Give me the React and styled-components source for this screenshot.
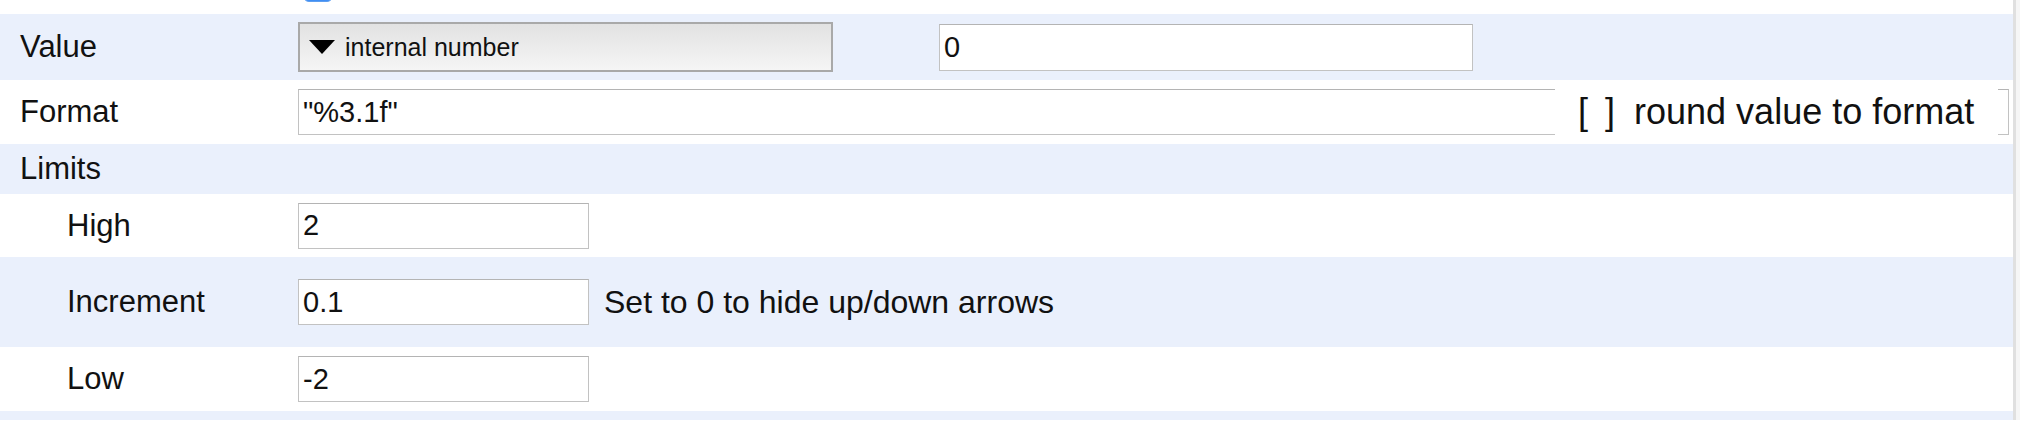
import React from 'react'
import styled, { createGlobalStyle } from 'styled-components'

const Global = createGlobalStyle`
  body {
    margin: 0;
    background: #fff;
    font-family: "Liberation Sans", Arial, sans-serif;
    color: #111;
  }
`

const Panel = styled.div`
  width: 2013px;
  border-right: 3px solid #e0e0e0;
  box-shadow: 4px 0 0 #f6f6f6;
`

const Row = styled.div`
  position: relative;
  display: flex;
  align-items: center;
  height: ${p => p.h}px;
  background: ${p => (p.shade ? '#eaf0fc' : '#fff')};
  overflow: ${p => (p.clip ? 'hidden' : 'visible')};
`

const Label = styled.div`
  box-sizing: border-box;
  flex: none;
  width: 298px;
  padding-left: ${p => (p.indent ? 67 : 20)}px;
  font-size: 31px;
`

const Checkbox = styled.div`
  margin-left: 303px;
  margin-top: -28px;
  align-self: flex-start;
  width: 30px;
  height: 30px;
  box-sizing: border-box;
  border-radius: 6px;
  background: #3f8ef4;
  border: 1px solid #5d9ef0;
`

const Dropdown = styled.div`
  box-sizing: border-box;
  flex: none;
  display: flex;
  align-items: center;
  gap: 10px;
  width: 535px;
  height: 50px;
  padding-left: 9px;
  border: 2px solid #a9a9a9;
  background: linear-gradient(#e2e2e2, #f5f5f5);
  font-size: 25px;
`

const Field = styled.input`
  box-sizing: border-box;
  flex: ${p => (p.grow ? '1' : 'none')};
  width: ${p => (p.w ? p.w + 'px' : 'auto')};
  height: ${p => p.h || 46}px;
  margin: 0 ${p => p.mr || 0}px 0 ${p => p.ml || 0}px;
  padding: 0 0 0 4px;
  border: 1px solid #c2c2c2;
  border-top-color: #b4b4b4;
  background: #fff;
  font-family: "Liberation Sans", Arial, sans-serif;
  font-size: 29px;
  color: #111;
  outline: none;
`

const Note = styled.div`
  margin-left: 15px;
  font-size: 32px;
`

const RoundOption = styled.div`
  position: absolute;
  top: 0;
  right: 15px;
  box-sizing: border-box;
  display: flex;
  align-items: center;
  width: 443px;
  height: 63px;
  padding-left: 23px;
  background: #fff;
  font-size: 36px;
  white-space: pre;
`

const Bracket = styled.span`
  margin-right: ${p => p.gap}px;
`

const Caret = () => (
  <svg width="26" height="14" viewBox="0 0 26 14">
    <polygon points="0,0 26,0 13,14" fill="#000" />
  </svg>
)

export default function App() {
  return (
    <>
      <Global />
      <Panel>
        <Row h={14} clip>
          <Checkbox />
        </Row>
        <Row h={66} shade>
          <Label>Value</Label>
          <Dropdown>
            <Caret />
            internal number
          </Dropdown>
          <Field ml={106} w={534} h={47} readOnly value="0" />
        </Row>
        <Row h={64}>
          <Label>Format</Label>
          <Field grow mr={4} readOnly value={'"%3.1f"'} />
          <RoundOption>
            <Bracket gap={17}>[</Bracket>
            <Bracket gap={19}>]</Bracket>
            round value to format
          </RoundOption>
        </Row>
        <Row h={50} shade>
          <Label>Limits</Label>
        </Row>
        <Row h={63}>
          <Label indent>High</Label>
          <Field w={291} readOnly value="2" />
        </Row>
        <Row h={90} shade>
          <Label indent>Increment</Label>
          <Field w={291} readOnly value="0.1" />
          <Note>Set to 0 to hide up/down arrows</Note>
        </Row>
        <Row h={64}>
          <Label indent>Low</Label>
          <Field w={291} readOnly value="-2" />
        </Row>
        <Row h={9} shade />
      </Panel>
    </>
  )
}
